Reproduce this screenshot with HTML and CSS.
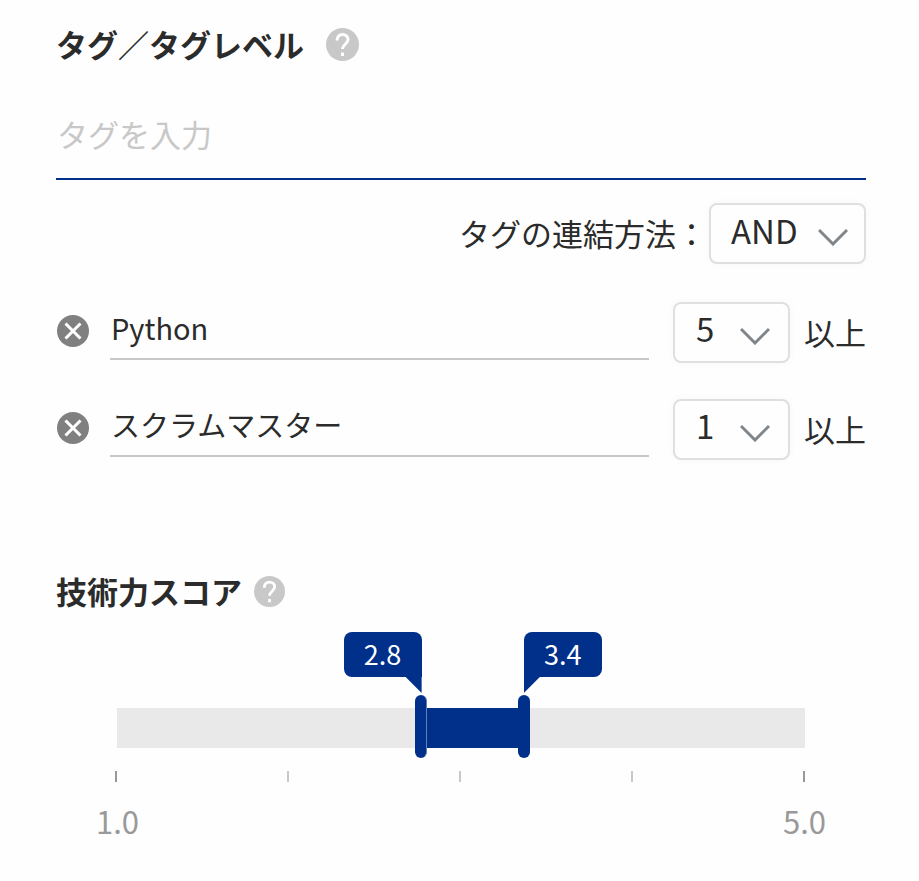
FILE: index.html
```
<!DOCTYPE html>
<html lang="ja">

<head>
    <meta charset="utf-8">
    <meta name="viewport" content="width=device-width, initial-scale=1">
    <title>タグ検索</title>
    <link rel="stylesheet" href="styles.css">
</head>

<body>
    <form class="filter">
        <section class="tags">
            <h2 class="heading">
                <label for="tag">タグ／タグレベル</label>
                <button type="button" class="help" aria-label="ヘルプ">
                    <svg viewBox="0 0 33 33"><circle cx="16.500" cy="16.500" r="16.500"/><path d="M11 12.500C11 8.500 13.500 6.500 16.500 6.500s5.500 2 5.500 5c0 4.500-5.500 5-5.500 9.500"/><path d="M16.500 24.500v3.500"/></svg>
                </button>
            </h2>
            <input type="text" id="tag" class="tag-input" placeholder="タグを入力">

            <div class="join">
                <label for="join">タグの連結方法：</label>
                <div class="select">
                    <select id="join">
                        <option>AND</option>
                        <option>OR</option>
                    </select>
                    <svg class="arrow" viewBox="0 0 30 18"><path d="M1 2l14 14L29 2"/></svg>
                </div>
            </div>

            <div class="tag-row">
                <button type="button" class="remove" aria-label="Pythonを削除">
                    <svg viewBox="0 0 32 32"><circle cx="16" cy="16" r="16"/><path d="M8.500 8.500l15 15M23.500 8.500l-15 15"/></svg>
                </button>
                <input type="text" class="tag-name" value="Python" aria-label="タグ名">
                <div class="select">
                    <select id="level1">
                        <option>1</option>
                        <option>2</option>
                        <option>3</option>
                        <option>4</option>
                        <option selected>5</option>
                    </select>
                    <svg class="arrow" viewBox="0 0 30 18"><path d="M1 2l14 14L29 2"/></svg>
                </div>
                <label for="level1">以上</label>
            </div>

            <div class="tag-row">
                <button type="button" class="remove" aria-label="スクラムマスターを削除">
                    <svg viewBox="0 0 32 32"><circle cx="16" cy="16" r="16"/><path d="M8.500 8.500l15 15M23.500 8.500l-15 15"/></svg>
                </button>
                <input type="text" class="tag-name" value="スクラムマスター" aria-label="タグ名">
                <div class="select">
                    <select id="level2">
                        <option selected>1</option>
                        <option>2</option>
                        <option>3</option>
                        <option>4</option>
                        <option>5</option>
                    </select>
                    <svg class="arrow" viewBox="0 0 30 18"><path d="M1 2l14 14L29 2"/></svg>
                </div>
                <label for="level2">以上</label>
            </div>
        </section>

        <section class="score">
            <h2 class="heading heading-score">
                技術力スコア
                <button type="button" class="help" aria-label="ヘルプ">
                    <svg viewBox="0 0 33 33"><circle cx="16.500" cy="16.500" r="16.500"/><path d="M11 12.500C11 8.500 13.500 6.500 16.500 6.500s5.500 2 5.500 5c0 4.500-5.500 5-5.500 9.500"/><path d="M16.500 24.500v3.500"/></svg>
                </button>
            </h2>
            <div class="slider">
                <div class="range" style="left: 45%; width: 15%"></div>
                <input type="range" class="thumb" id="min" min="1" max="5" step="0.1" value="2.8" aria-label="最小スコア">
                <input type="range" class="thumb" id="max" min="1" max="5" step="0.1" value="3.4" aria-label="最大スコア">
                <output class="bubble bubble-min" for="min" style="right: 55%">2.8</output>
                <output class="bubble bubble-max" for="max" style="left: 60%">3.4</output>
            </div>
            <div class="ticks">
                <span></span><span></span><span></span><span></span><span></span>
            </div>
            <div class="scale">
                <span>1.0</span>
                <span>5.0</span>
            </div>
        </section>
    </form>
    <script>
        const range = document.querySelector('.range');
        const min = document.querySelector('#min');
        const max = document.querySelector('#max');
        const minBubble = document.querySelector('.bubble-min');
        const maxBubble = document.querySelector('.bubble-max');

        function update() {
            const from = (min.value - 1) * 25;
            const to = (max.value - 1) * 25;
            range.style.left = `${from}%`;
            range.style.width = `${Math.max(to - from, 0)}%`;
            minBubble.style.right = `${100 - from}%`;
            maxBubble.style.left = `${to}%`;
            minBubble.textContent = Number(min.value).toFixed(1);
            maxBubble.textContent = Number(max.value).toFixed(1);
        }

        min.addEventListener('input', update);
        max.addEventListener('input', update);
    </script>
</body>

</html>
```
FILE: styles.css
```
* {
    box-sizing: border-box;
}

body {
    margin: 0;
    background: #fefefe;
    color: #2b2b2b;
    font-family: "Noto Sans CJK JP", sans-serif;
    font-size: 31px;
    line-height: 48px;
}

input,
select,
button {
    margin: 0;
    padding: 0;
    border: 0;
    border-radius: 0;
    background: none;
    color: inherit;
    font: inherit;
    outline: none;
}

button {
    cursor: pointer;
}

svg {
    display: block;
}

.filter {
    padding: 20px 53px 32px 56px;
}

.heading {
    display: flex;
    align-items: center;
    gap: 22px;
    margin: 0;
    font-size: 31px;
    font-weight: bold;
}

.heading-score {
    gap: 12px;
}

.help svg {
    width: 33px;
    height: 33px;
    fill: none;
    stroke: #fff;
    stroke-width: 3;
}

.help circle {
    fill: #c8c8c8;
    stroke: none;
}

.heading-score .help svg {
    width: 31px;
    height: 31px;
}

.tag-input {
    display: block;
    width: 100%;
    height: 88px;
    margin-top: 24px;
    padding: 0 0 4px 1px;
    border-bottom: 2px solid #00308a;
}

.tag-input::placeholder {
    color: #c8c8c8;
    opacity: 1;
}

.join {
    display: flex;
    justify-content: flex-end;
    align-items: center;
    margin-top: 23px;
}

.join label {
    padding: 0 2px 2px 0;
}

.select {
    display: grid;
    align-items: center;
    justify-items: end;
}

.select select {
    grid-area: 1 / 1;
    appearance: none;
    width: 117px;
    height: 61px;
    padding: 0 0 10px 21px;
    border: 2px solid #dfdfdf;
    border-radius: 8px;
    box-shadow: 0 0 8px rgba(0, 0, 0, 0.03);
    font-size: 33px;
}

.join select {
    width: 157px;
    padding: 0 0 8px 20px;
}

.arrow {
    grid-area: 1 / 1;
    width: 30px;
    height: 18px;
    margin: 6px 20px 0 0;
    fill: none;
    stroke: #808589;
    stroke-width: 3;
    pointer-events: none;
}

.join .arrow {
    margin-right: 18px;
}

.tag-row {
    display: flex;
    align-items: center;
    margin-top: 38px;
}

.tag-row + .tag-row {
    margin-top: 36px;
}

.remove {
    padding-bottom: 4px;
}

.remove svg {
    width: 34px;
    height: 32px;
    fill: #808080;
    stroke: #fff;
    stroke-width: 3;
}

.remove circle {
    stroke: none;
}

.tag-name {
    flex: 1;
    min-width: 0;
    height: 54px;
    margin: 0 24px 0 20px;
    padding: 0 0 10px 1px;
    border-bottom: 2px solid #c8c8c8;
    font-size: 29px;
    line-height: 42px;
}

.tag-row label {
    margin-left: 14px;
    padding-bottom: 2px;
}

.score {
    margin-top: 107px;
}

.slider {
    position: relative;
    height: 40px;
    margin: 93px 61px 0;
    background: #e9e9e9;
}

.range {
    position: absolute;
    top: 0;
    height: 40px;
    background: #00308a;
}

/* the thumb's right edge marks the value */
.thumb {
    position: absolute;
    top: -13px;
    left: -12px;
    width: calc(100% + 12px);
    height: 63px;
    appearance: none;
    pointer-events: none;
}

.thumb::-webkit-slider-thumb {
    appearance: none;
    width: 12px;
    height: 63px;
    border-radius: 6px;
    background: #00308a;
    cursor: pointer;
    pointer-events: auto;
}

.thumb::-moz-range-thumb {
    width: 12px;
    height: 63px;
    border: 0;
    border-radius: 6px;
    background: #00308a;
    pointer-events: auto;
}

#min::-webkit-slider-thumb {
    border-right: 1px solid #5f7fb8;
}

.bubble {
    position: absolute;
    top: -76px;
    width: 78px;
    height: 45px;
    border-radius: 8px;
    background: #00308a;
    color: #fff;
    font-size: 27px;
    line-height: 43px;
    text-align: center;
}

.bubble::after {
    content: "";
    position: absolute;
    top: 37px;
    width: 16px;
    height: 24px;
    background: #00308a;
}

.bubble-min {
    margin-right: 5px;
    border-bottom-right-radius: 0;
}

.bubble-min::after {
    right: 0;
    clip-path: polygon(0 33%, 100% 33%, 100% 100%);
}

.bubble-max {
    margin-left: -6px;
    border-bottom-left-radius: 0;
}

.bubble-max::after {
    left: 0;
    clip-path: polygon(0 33%, 100% 33%, 0 100%);
}

.ticks {
    display: flex;
    justify-content: space-between;
    margin: 23px 61px 0 59px;
}

.ticks span {
    width: 2px;
    height: 11px;
    background: #c8c8c8;
}

.ticks span:first-child,
.ticks span:last-child {
    background: #999;
}

.scale {
    display: flex;
    justify-content: space-between;
    margin: 15px 40px 0;
    color: #999;
    font-size: 31px;
}
```
